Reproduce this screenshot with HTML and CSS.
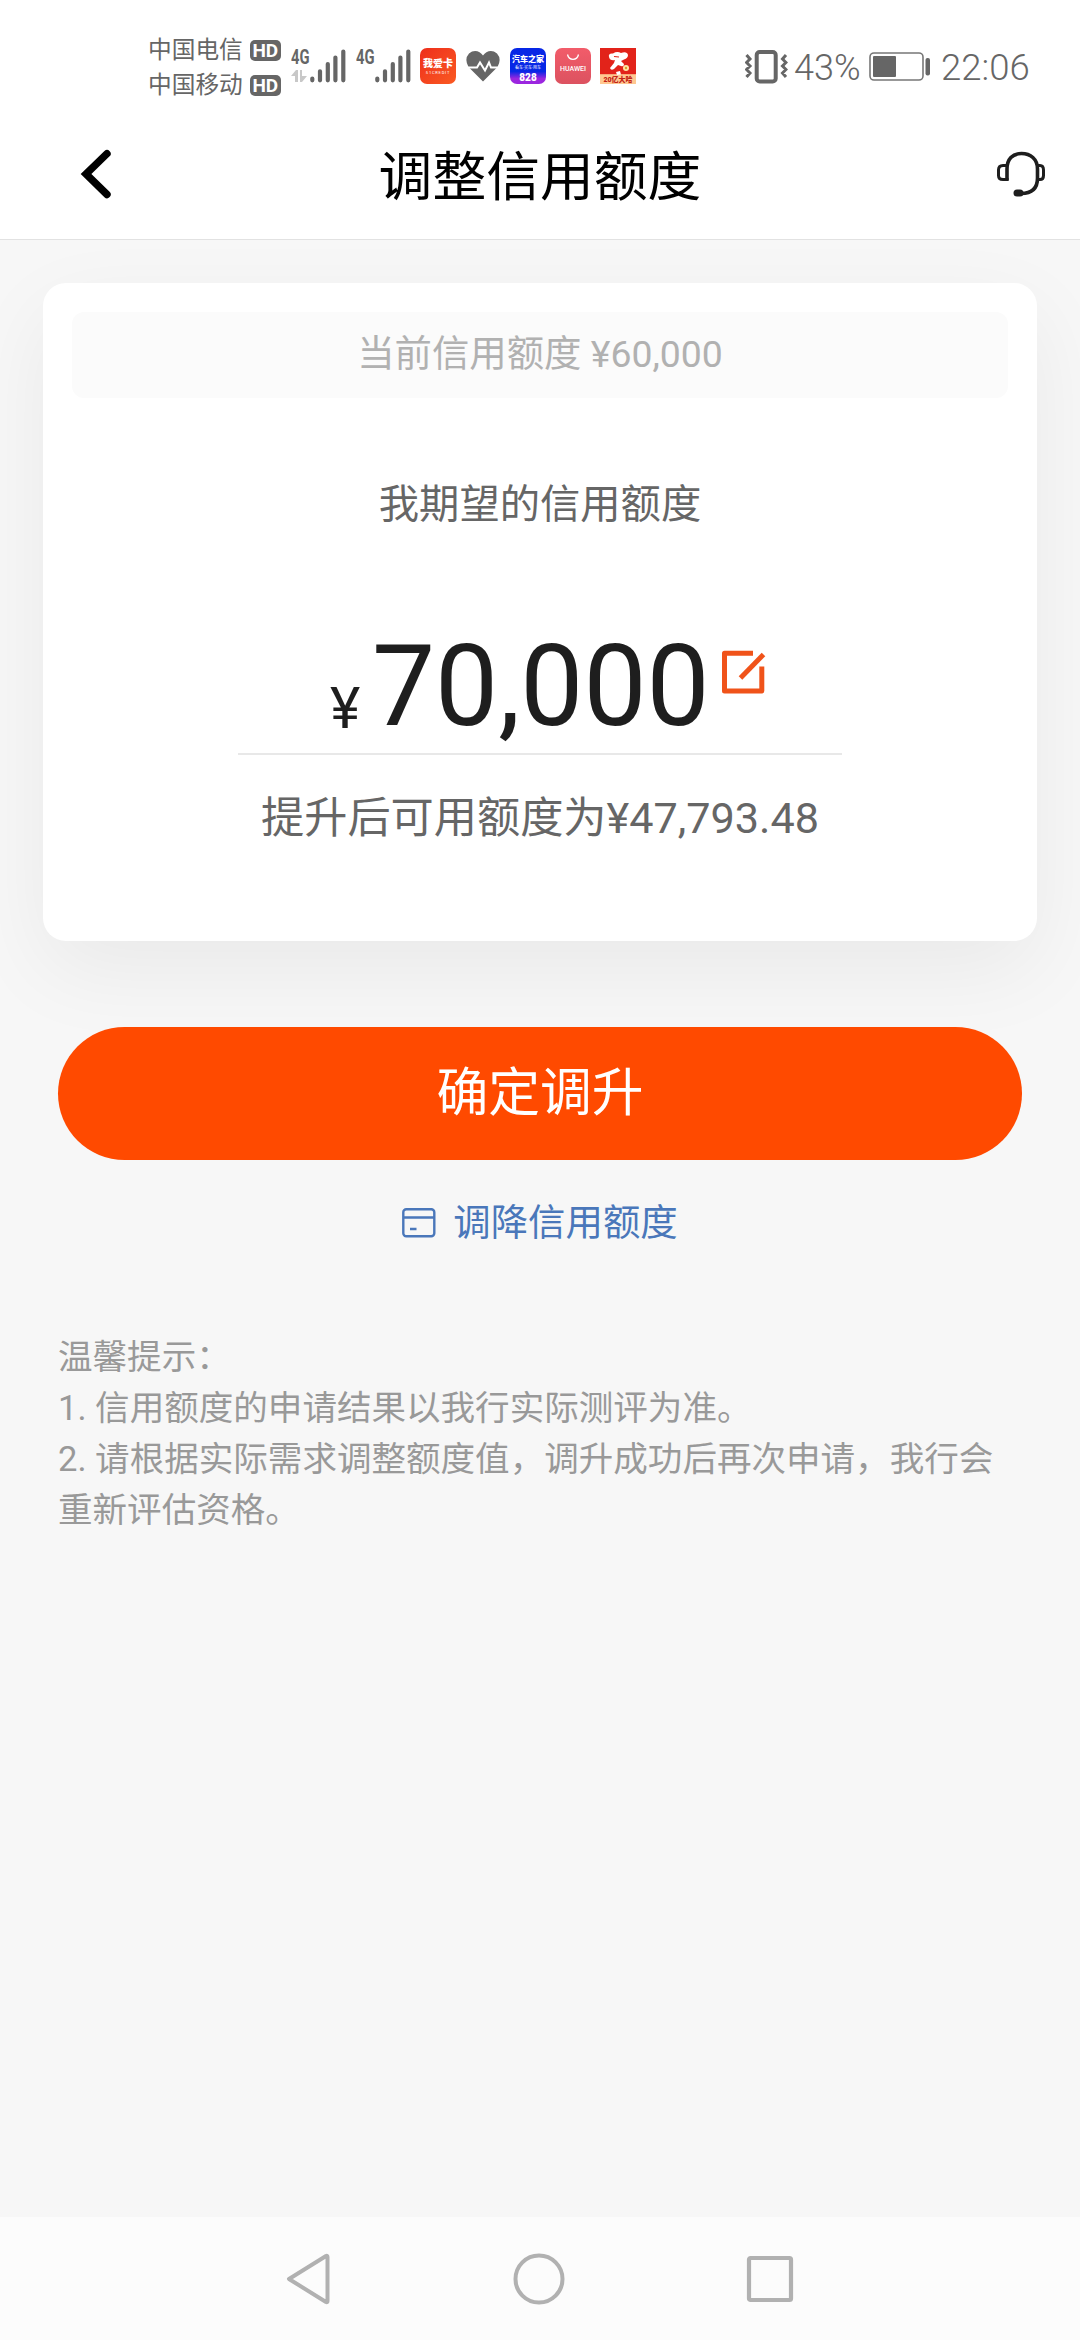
FILE: index.html
```html
<!DOCTYPE html>
<html lang="zh-CN">
<head>
<meta charset="utf-8">
<title>调整信用额度</title>
<link rel="stylesheet" href="styles.css">
</head>
<body>
<div class="screen">
  <div class="status">
    <div class="carriers">
      <div class="carrier"><span>中国电信</span><b class="hd">HD</b></div>
      <div class="carrier"><span>中国移动</span><b class="hd">HD</b></div>
    </div>
    <div class="signal">
      <div class="net"><span class="net-type">4G</span>
        <svg width="16" height="12" viewBox="0 0 16 12" fill="#c8c8c8"><path d="M0 6 5 0h2v12H4V6zM9 0h2v6h5l-5 6H9z"/></svg>
      </div>
      <svg class="bars" width="36" height="34" viewBox="0 0 36 34" stroke="#666" stroke-width="4.2" stroke-linecap="round"><path d="M2.3 29.5v1.8M10 22.3v9M17.8 15v16.3M25.4 8.5v22.8M33.3 2.5v28.8"/></svg>
    </div>
    <div class="signal">
      <div class="net"><span class="net-type">4G</span></div>
      <svg class="bars" width="36" height="34" viewBox="0 0 36 34" stroke="#666" stroke-width="4.2" stroke-linecap="round"><path d="M2.3 29.5v1.8M10 22.3v9M17.8 15v16.3M25.4 8.5v22.8M33.3 2.5v28.8"/></svg>
    </div>
    <div class="apps">
      <div class="app app-card"><span class="app-name">我爱卡</span><span class="app-sub">51CREDIT</span></div>
      <svg width="36" height="36" viewBox="0 0 36 36"><path d="M18 33.500 3.500 19Q-1 11 4 5.500C9 1 15 3 18 7.500 21 3 27 1 32 5.500Q37 11 32.500 19z" fill="#666"/><path d="M1 19.500h11l3-5 5 8 4-8 2 5h9" fill="none" stroke="#fff" stroke-width="2"/></svg>
      <div class="app app-auto"><span class="app-name">汽车之家</span><span class="app-sub">看车·买车·用车</span><span class="app-promo">828</span></div>
      <div class="app app-huawei"><svg width="14" height="7" viewBox="0 0 14 7"><path d="M1.500.5C3 7 11 7 12.500.5" fill="none" stroke="#fff" stroke-width="1.300"/></svg><span class="app-brand">HUAWEI</span></div>
      <div class="app app-jd">
        <svg width="36" height="28" viewBox="0 0 36 28"><path d="M9 9Q8 5 13 5.500Q17 3 21 5Q27 3 28 7Q28 10 24 11.500L21 13 24 16Q24 19 21 18L18 17 14 21Q11 23 10 20L14 15 15 12Q10 13 9 9zM16 24l4-1 1 3.500-4 .5z" fill="#fff"/><path d="M14 8.500l5 .5" stroke="#e2231a" stroke-width="1.200"/><circle cx="26" cy="20" r="3" fill="#ffe5a8"/><circle cx="26" cy="20" r="1.200" fill="#dba02c"/></svg>
        <span class="jd-label">20亿大哈</span>
      </div>
    </div>
    <div class="system">
      <svg width="43" height="34" viewBox="0 0 43 34" fill="none" stroke="#666"><rect x="11.700" y="2" width="19" height="29.500" rx="3" stroke-width="4"/><path d="M1.500 5 5 9 1.500 12.500 5 16 1.500 19.500 5 23 1.500 27M41 5 37.500 9 41 12.500 37.500 16 41 19.500 37.500 23 41 27" stroke-width="3"/></svg>
      <span class="pct">43%</span>
      <svg class="battery" width="62" height="30" viewBox="0 0 62 30"><rect x="1" y="1" width="53" height="27" rx="4" fill="none" stroke="#777" stroke-width="1.600"/><rect x="4" y="4" width="23" height="21" rx="1" fill="#666"/><rect x="56.500" y="6" width="4.500" height="17.500" rx="2" fill="#666"/></svg>
      <span class="clock">22:06</span>
    </div>
  </div>
  <header class="header">
    <svg class="back" width="34" height="52" viewBox="0 0 34 52" fill="none" stroke="#000" stroke-width="7.400" stroke-linecap="round"><path d="M28 5.700 7 26l21 20.500"/></svg>
    <h1>调整信用额度</h1>
    <svg class="service" width="50" height="48" viewBox="0 0 50 48" fill="none" stroke="#1e1e1e" stroke-width="3.600"><path d="M11 30.500V19C11 9 16.500 3.500 25.500 3.500S41.500 9 41.500 19v9C41.500 38 36 43.500 25 43.500"/><path d="M11 15.500H7Q2.500 15.500 2.500 20v5.500Q2.500 29.500 7 29.500h5.500M42 15.500h2q3.500 0 3.500 4.500v5.500q0 4-3.500 4H42" stroke-width="3"/><rect x="17.500" y="39.500" width="10" height="7" rx="3.500" fill="#1e1e1e" stroke="none"/></svg>
  </header>
  <main class="content">
    <section class="card">
      <div class="current">当前信用额度 ¥60,000</div>
      <div class="label">我期望的信用额度</div>
      <div class="amount">
        <span class="yen">¥</span><span class="num">70,000</span>
        <svg class="edit" width="46" height="47" viewBox="0 0 46 47" fill="none" stroke="#f0531a" stroke-width="5"><path d="M33 4.300H4.500v37.700h37.300V17.500" stroke-linejoin="round"/><path d="M20.500 29 43.500 5.500" stroke-width="5"/></svg>
      </div>
      <div class="available">提升后可用额度为¥47,793.48</div>
    </section>
    <button class="confirm">确定调升</button>
    <a class="lower">
      <svg width="34" height="30" viewBox="0 0 34 30" fill="none" stroke="#4a77ba" stroke-width="2.400"><rect x="1.300" y="1.300" width="31" height="27" rx="3"/><path d="M1.300 9.500h31M8 21h6.500"/></svg>
      <span>调降信用额度</span>
    </a>
    <div class="tips">
      <p>温馨提示：</p>
      <p>1. 信用额度的申请结果以我行实际测评为准。</p>
      <p>2. 请根据实际需求调整额度值，调升成功后再次申请，我行会重新评估资格。</p>
    </div>
  </main>
  <nav class="navbar">
    <svg width="46" height="52" viewBox="0 0 46 52"><path d="M40 3 3 26l37 23q1.500.8 1.500-1V4q0-1.800-1.500-1z" fill="none" stroke="#b1b1b1" stroke-width="4" stroke-linejoin="round"/></svg>
    <svg width="52" height="52" viewBox="0 0 52 52"><circle cx="26" cy="26" r="23.500" fill="none" stroke="#b1b1b1" stroke-width="4"/></svg>
    <svg width="48" height="48" viewBox="0 0 48 48"><rect x="3" y="3" width="42" height="42" rx="1.500" fill="none" stroke="#b1b1b1" stroke-width="4.200"/></svg>
  </nav>
</div>
</body>
</html>
```
FILE: styles.css
```css
* { box-sizing: border-box; margin: 0; padding: 0; }
body {
  width: 1080px;
  font-family: Roboto, "Noto Sans CJK SC", sans-serif;
  color: #666;
}
svg { display: block; flex: none; }
.screen { display: flex; flex-direction: column; width: 1080px; height: 2340px; overflow: hidden; background: #f7f7f7; }

.status { display: flex; align-items: flex-start; height: 115px; padding-left: 148px; background: #fff; }
.carriers { width: 143px; padding-top: 33px; }
.carrier { display: flex; align-items: center; gap: 7px; height: 35px; font-size: 23.700px; line-height: 35px; white-space: nowrap; }
.hd { width: 31px; height: 21px; border-radius: 5px; background: #666; color: #fff; font-size: 19px; font-weight: 700; line-height: 21px; text-align: center; }
.signal { display: flex; width: 65px; padding-top: 49px; }
.net { width: 19px; }
.net-type { display: block; width: 29px; margin-bottom: 5px; font-family: Roboto, sans-serif; font-size: 20.500px; font-weight: 700; line-height: 16px; transform: scaleX(.72); transform-origin: 0 0; }
.apps { display: flex; gap: 9px; margin-left: -1px; padding-top: 48px; }
.app { display: flex; flex-direction: column; align-items: center; width: 36px; height: 36px; border-radius: 7px; overflow: hidden; color: #fff; white-space: nowrap; }
.app-name { font-weight: 900; }
.app-card { padding-top: 10px; background: linear-gradient(135deg, #ee2e1c, #fa5a22); }
.app-card .app-name { font-size: 10px; line-height: 12px; }
.app-sub { font-size: 4px; line-height: 5px; letter-spacing: .8px; }
.app-auto { padding-top: 7px; background: linear-gradient(#0727e6 65%, #9b26df 85%); }
.app-auto .app-name { font-size: 8px; line-height: 10px; }
.app-auto .app-sub { letter-spacing: 0; }
.app-promo { margin-top: 3px; font-size: 10px; font-weight: 900; line-height: 10px; }
.app-huawei { padding-top: 6px; background: linear-gradient(#f25c6a, #dc5260); }
.app-brand { margin-top: 2px; font-size: 7px; font-weight: 500; line-height: 12px; }
.app-jd { border-radius: 0; background: linear-gradient(#e2231a 72%, #ffc891 74%); }
.jd-label { color: #c22215; font-size: 7px; font-weight: 900; line-height: 8px; }
.system { display: flex; margin-left: 109px; padding-top: 50px; }
.pct, .clock { margin-top: -3px; font-size: 36px; font-weight: 300; line-height: 42px; }
.pct { width: 81px; padding-left: 6px; }
.battery { margin-top: 2px; }
.clock { margin-left: 10px; font-size: 36.500px; }

.header { display: grid; grid-template-columns: 1fr auto 1fr; height: 125px; background: #fff; border-bottom: 1px solid #e2e2e2; }
.header h1 { height: 124px; padding-top: 23px; color: #000; font-size: 53.800px; font-weight: 400; line-height: 80px; }
.back { margin: 33px 0 0 79px; }
.service { justify-self: end; margin: 35px 34px 0 0; }

.content { display: flex; flex: 1; flex-direction: column; }
.card { display: flex; flex-direction: column; align-items: center; height: 658px; margin: 43px 43px 0; padding: 29px; border-radius: 23px; background: #fff; box-shadow: 0 29px 87px rgba(0, 0, 0, .06); }
.current { align-self: stretch; height: 86px; border-radius: 12px; background: #fbfbfb; color: #b1b1b1; font-size: 37.400px; line-height: 84px; text-align: center; }
.label { margin-top: 77px; font-size: 40.300px; line-height: 60px; }
.amount { display: flex; align-items: flex-start; width: 604px; height: 143px; margin-top: 77px; padding-left: 92px; border-bottom: 2px solid #e8e8e8; color: #1e1e1e; white-space: nowrap; }
.yen { width: 42px; margin-top: 63px; font-size: 57.600px; line-height: 68px; }
.num { margin-top: 9px; font-size: 112.300px; line-height: 132px; }
.edit { margin: 37px 0 0 10px; }
.available { margin-top: 33px; font-size: 43.200px; line-height: 62px; }
.confirm { height: 133px; margin: 86px 58px 0; border: 0; border-radius: 67px; background: #ff4a00; color: #fff; font: inherit; font-size: 51.800px; line-height: 133px; }
.lower { display: flex; align-items: center; justify-content: center; height: 56px; margin-top: 35px; gap: 17px; color: #4a77ba; font-size: 37.400px; line-height: 56px; }
.tips { margin: 81px 58px 0; color: #999; font-size: 34.560px; line-height: 51px; }

.navbar { display: flex; align-items: center; justify-content: space-between; height: 123px; padding: 0 286px; background: #fcfcfc; }
```
